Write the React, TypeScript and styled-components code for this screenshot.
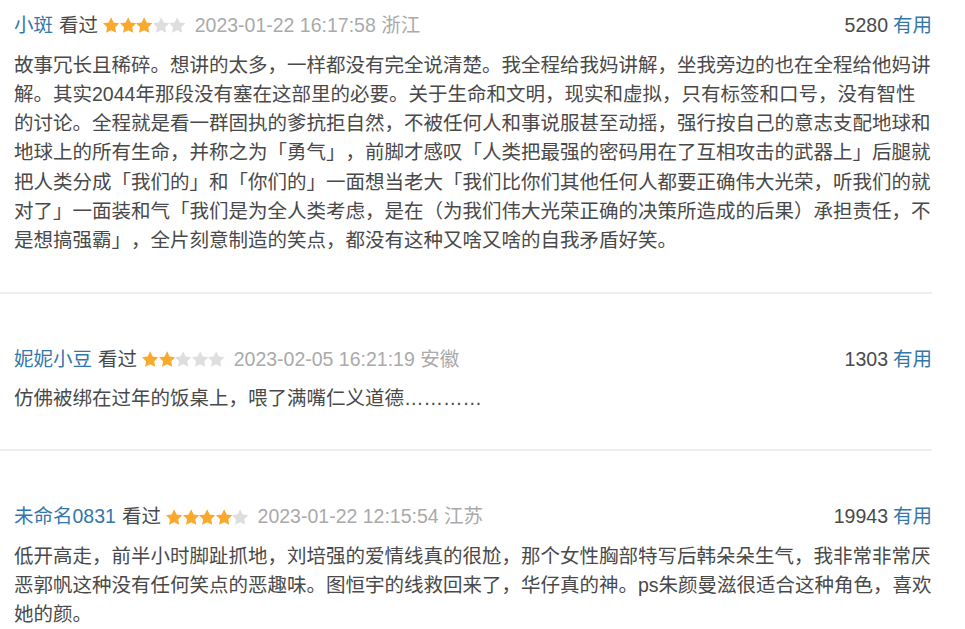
import React from 'react'
import styled, { createGlobalStyle } from 'styled-components'

const GlobalStyle = createGlobalStyle`
  html, body {
    margin: 0;
    padding: 0;
    background: #fff;
  }
  body {
    font-family: "Liberation Sans", "Noto Sans CJK SC", sans-serif;
  }
`

const List = styled.div`
  width: 932px;
`

const Item = styled.div`
  padding: 51px 0 36px 14px;
  border-bottom: 2px solid #eeeeee;

  &:first-child {
    padding-top: 11px;
  }
`

const Header = styled.div`
  display: flex;
  align-items: center;
  height: 29px;
  font-size: 19.5px;
  line-height: 29px;
  white-space: nowrap;
`

const Name = styled.span`
  color: #3377aa;
`

const Watched = styled.span`
  color: #494949;
  margin-left: 6px;
`

const StarRow = styled.span`
  display: inline-flex;
  align-items: center;
  margin-left: 5px;
  gap: 0.3px;
`

const StarIcon = styled.svg<{ $on: boolean }>`
  width: 16.3px;
  height: 16.3px;
  fill: ${(p) => (p.$on ? '#f8a92e' : '#dedede')};
`

const Time = styled.span`
  color: #aaaaaa;
  margin-left: 9px;
`

const Votes = styled.span`
  margin-left: auto;
  color: #494949;
`

const Useful = styled.span`
  color: #3377aa;
  margin-left: 5px;
`

const Body = styled.p`
  margin: 10.5px 0 0;
  font-size: 19.5px;
  line-height: 29.3px;
  color: #494949;
  text-spacing-trim: space-all;
`

// five point star inside a 16x16 box
const starPoints = Array.from({ length: 10 }, (_, i) => {
  const a = ((-90 + i * 36) * Math.PI) / 180
  const r = i % 2 === 0 ? 8.5 : 4.2
  return `${(8 + r * Math.cos(a)).toFixed(2)},${(8.7 + r * Math.sin(a)).toFixed(2)}`
}).join(' ')

const Stars = ({ value }: { value: number }) => (
  <StarRow>
    {[0, 1, 2, 3, 4].map((i) => (
      <StarIcon key={i} $on={i < value} viewBox="0 0 16 16">
        <polygon points={starPoints} strokeLinejoin="round" />
      </StarIcon>
    ))}
  </StarRow>
)

const reviews = [
  {
    name: '小斑',
    rating: 3,
    time: '2023-01-22 16:17:58 浙江',
    votes: 5280,
    text: '故事冗长且稀碎。想讲的太多，一样都没有完全说清楚。我全程给我妈讲解，坐我旁边的也在全程给他妈讲解。其实2044年那段没有塞在这部里的必要。关于生命和文明，现实和虚拟，只有标签和口号，没有智性的讨论。全程就是看一群固执的爹抗拒自然，不被任何人和事说服甚至动摇，强行按自己的意志支配地球和地球上的所有生命，并称之为「勇气」，前脚才感叹「人类把最强的密码用在了互相攻击的武器上」后腿就把人类分成「我们的」和「你们的」一面想当老大「我们比你们其他任何人都要正确伟大光荣，听我们的就对了」一面装和气「我们是为全人类考虑，是在（为我们伟大光荣正确的决策所造成的后果）承担责任，不是想搞强霸」，全片刻意制造的笑点，都没有这种又啥又啥的自我矛盾好笑。',
  },
  {
    name: '妮妮小豆',
    rating: 2,
    time: '2023-02-05 16:21:19 安徽',
    votes: 1303,
    text: '仿佛被绑在过年的饭桌上，喂了满嘴仁义道德…………',
  },
  {
    name: '未命名0831',
    rating: 4,
    time: '2023-01-22 12:15:54 江苏',
    votes: 19943,
    text: '低开高走，前半小时脚趾抓地，刘培强的爱情线真的很尬，那个女性胸部特写后韩朵朵生气，我非常非常厌恶郭帆这种没有任何笑点的恶趣味。图恒宇的线救回来了，华仔真的神。ps朱颜曼滋很适合这种角色，喜欢她的颜。',
  },
]

const App = () => {
  return (
    <>
      <GlobalStyle />
      <List>
        {reviews.map((r) => (
          <Item key={r.name}>
            <Header>
              <Name>{r.name}</Name>
              <Watched>看过</Watched>
              <Stars value={r.rating} />
              <Time>{r.time}</Time>
              <Votes>
                {r.votes}
                <Useful>有用</Useful>
              </Votes>
            </Header>
            <Body>{r.text}</Body>
          </Item>
        ))}
      </List>
    </>
  )
}

export default App
